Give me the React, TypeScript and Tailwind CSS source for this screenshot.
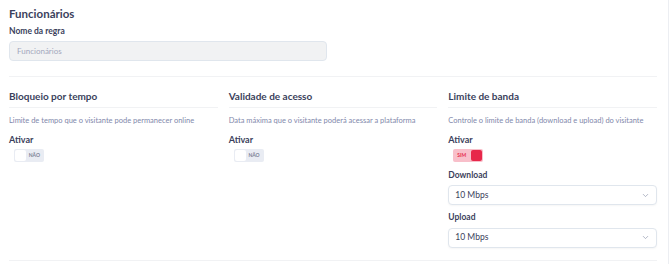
import { ChevronDown } from 'lucide-react'

function Toggle({ on }: { on: boolean }) {
  if (on) {
    return (
      <div className="flex h-[13px] w-[30px] items-center justify-between rounded-[2px] bg-[#f8bfca] pl-[4px] pr-[1px]">
        <span className="text-[5px] font-bold leading-none text-[#e7304d]">SIM</span>
        <span className="h-[11px] w-[11px] rounded-[2px] bg-[#e7274a]" />
      </div>
    )
  }
  return (
    <div className="flex h-[13px] w-[30px] items-center justify-between rounded-[2px] bg-[#e9ecf3] pl-[1px] pr-[4px]">
      <span className="h-[11px] w-[11px] rounded-[2px] bg-white" />
      <span className="text-[5px] font-bold leading-none text-[#7c8195]">NÃO</span>
    </div>
  )
}

function Select({ value }: { value: string }) {
  return (
    <div className="flex h-[20px] items-center justify-between rounded-[4px] border border-[#e0e6ed] bg-white pl-[6px] pr-[6px] shadow-[0_1px_2px_rgba(0,0,0,0.04)]">
      <span className="text-[8.5px] text-[#3b3f5c]">{value}</span>
      <ChevronDown className="h-[9px] w-[9px] text-[#9aa0b4]" strokeWidth={2} />
    </div>
  )
}

function Column({
  title,
  desc,
  on,
  children,
}: {
  title: string
  desc: string
  on: boolean
  children?: React.ReactNode
}) {
  return (
    <div className="flex flex-col">
      <div className="flex h-[31px] items-end border-b border-[#f1f2f4] pb-[6px]">
        <h3 className="whitespace-nowrap text-[10px] font-bold leading-none text-[#3b3f5c]">{title}</h3>
      </div>
      <p className="mt-[9px] whitespace-nowrap text-[7.5px] leading-none text-[#7f88ab]">{desc}</p>
      <span className="mt-[10px] text-[9px] font-bold leading-none text-[#3b3f5c]">Ativar</span>
      <div className="mt-[5px] pl-[5px]">
        <Toggle on={on} />
      </div>
      {children}
    </div>
  )
}

export default function App() {
  return (
    <div
      className="h-[264px] w-[670px] overflow-hidden bg-white"
      style={{ fontFamily: 'Lato, "Liberation Sans", sans-serif' }}
    >
      <div className="h-full w-[669px] border-r border-[#eceef2] pl-[9px] pr-[11px]">
        <div className="pt-[8px]">
          <h2 className="text-[11.5px] font-bold leading-none text-[#3b3f5c]">Funcionários</h2>
          <label className="mt-[7px] block text-[8.5px] font-bold leading-none text-[#3b3f5c]">Nome da regra</label>
          <div className="mt-[6px] flex h-[20px] w-[318px] items-center rounded-[4px] border border-[#e0e6ed] bg-[#f1f2f3] pl-[7px]">
            <span className="text-[8px] text-[#a3a8bd]">Funcionários</span>
          </div>
        </div>
        <div className="mt-[15px] border-t border-[#f1f2f4]" />
        <div className="grid grid-cols-3 gap-[11px]">
          <Column
            title="Bloqueio por tempo"
            desc="Limite de tempo que o visitante pode permanecer online"
            on={false}
          />
          <Column
            title="Validade de acesso"
            desc="Data máxima que o visitante poderá acessar a plataforma"
            on={false}
          />
          <Column
            title="Limite de banda"
            desc="Controle o limite de banda (download e upload) do visitante"
            on={true}
          >
            <span className="mt-[9px] text-[8.5px] font-bold leading-none text-[#3b3f5c]">Download</span>
            <div className="mt-[6px]">
              <Select value="10 Mbps" />
            </div>
            <span className="mt-[8px] text-[8.5px] font-bold leading-none text-[#3b3f5c]">Upload</span>
            <div className="mt-[6px]">
              <Select value="10 Mbps" />
            </div>
          </Column>
        </div>
        <div className="mt-[12px] border-t border-[#f1f2f4]" />
      </div>
    </div>
  )
}
